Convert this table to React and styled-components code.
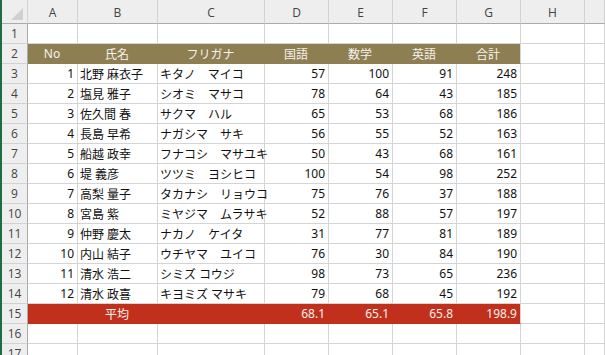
import React from "react";
import styled, { createGlobalStyle, css } from "styled-components";

const Global = createGlobalStyle`
  html, body { margin: 0; padding: 0; background: #ffffff; }
  body { font-family: "Noto Sans", "Noto Sans CJK JP", sans-serif; }
`;

const COLS = "26px 50px 80px 107px 64px 64px 64px 64px 64px 1fr";

const Sheet = styled.div`
  width: 605px;
  height: 355px;
  overflow: hidden;
  box-sizing: border-box;
  border-left: 2px solid #1f6e43;
  background: #fff;
`;

const Row = styled.div`
  display: grid;
  grid-template-columns: ${COLS};
  height: ${(p) => (p.$head ? 24 : 20)}px;
`;

const Corner = styled.div`
  box-sizing: border-box;
  background: #eeeeee;
  border-right: 1px solid #d2d2d2;
  border-bottom: 1px solid #ababab;
  display: flex;
  align-items: flex-end;
  justify-content: flex-end;
  padding: 0 4px 3px 0;
`;

const ColHead = styled.div`
  box-sizing: border-box;
  background: #eeeeee;
  border-right: 1px solid #d2d2d2;
  border-bottom: 1px solid #ababab;
  color: #444444;
  font-family: "Open Sans", "Noto Sans", sans-serif;
  font-size: 12px;
  display: flex;
  align-items: center;
  justify-content: center;
  padding-top: 1px;
`;

const RowHead = styled.div`
  box-sizing: border-box;
  background: #eeeeee;
  border-right: 1px solid #ababab;
  border-bottom: 1px solid #d2d2d2;
  color: #444444;
  font-family: "Open Sans", "Noto Sans", sans-serif;
  font-size: 12px;
  display: flex;
  align-items: center;
  justify-content: center;
`;

const fills = {
  head: "#8e7f53",
  avg: "#c0301c",
};

const Cell = styled.div`
  box-sizing: border-box;
  border-right: 1px solid #d4d4d4;
  border-bottom: 1px solid #d4d4d4;
  font-size: 12px;
  color: #111111;
  display: flex;
  align-items: center;
  white-space: nowrap;
  overflow: visible;
  padding: 0 3px 0 2px;
  justify-content: ${(p) =>
    p.$align === "right" ? "flex-end" : p.$align === "center" ? "center" : "flex-start"};
  ${(p) =>
    p.$fill &&
    css`
      background: ${fills[p.$fill]};
      color: #f6f2ee;
      border-right-color: ${p.$edge ? "#d4d4d4" : fills[p.$fill]};
      border-bottom-color: ${fills[p.$fill]};
    `}
`;

const Triangle = () => (
  <svg width="12" height="12" viewBox="0 0 12 12">
    <polygon points="12,0 12,12 0,12" fill="#d0d0d0" />
  </svg>
);

const letters = ["A", "B", "C", "D", "E", "F", "G", "H", ""];

const data = [
  [1, "北野 麻衣子", "キタノ　マイコ", 57, 100, 91, 248],
  [2, "塩見 雅子", "シオミ　マサコ", 78, 64, 43, 185],
  [3, "佐久間 春", "サクマ　ハル", 65, 53, 68, 186],
  [4, "長島 早希", "ナガシマ　サキ", 56, 55, 52, 163],
  [5, "船越 政幸", "フナコシ　マサユキ", 50, 43, 68, 161],
  [6, "堤 義彦", "ツツミ　ヨシヒコ", 100, 54, 98, 252],
  [7, "高梨 量子", "タカナシ　リョウコ", 75, 76, 37, 188],
  [8, "宮島 紫", "ミヤジマ　ムラサキ", 52, 88, 57, 197],
  [9, "仲野 慶太", "ナカノ　ケイタ", 31, 77, 81, 189],
  [10, "内山 結子", "ウチヤマ　ユイコ", 76, 30, 84, 190],
  [11, "清水 浩二", "シミズ コウジ", 98, 73, 65, 236],
  [12, "清水 政喜", "キヨミズ マサキ", 79, 68, 45, 192],
];

const headers = ["No", "氏名", "フリガナ", "国語", "数学", "英語", "合計"];

const Blank = () => (
  <>
    <Cell />
    <Cell />
  </>
);

export default function App() {
  return (
    <>
      <Global />
      <Sheet>
        <Row $head>
          <Corner>
            <Triangle />
          </Corner>
          {letters.map((l, i) => (
            <ColHead key={i}>{l}</ColHead>
          ))}
        </Row>
        <Row>
          <RowHead>1</RowHead>
          {letters.map((_, i) => (
            <Cell key={i} />
          ))}
        </Row>
        <Row>
          <RowHead>2</RowHead>
          {headers.map((h, i) => (
            <Cell key={i} $fill="head" $edge={i === 6} $align="center">
              {h}
            </Cell>
          ))}
          <Blank />
        </Row>
        {data.map((r, idx) => (
          <Row key={idx}>
            <RowHead>{idx + 3}</RowHead>
            <Cell $align="right">{r[0]}</Cell>
            <Cell>{r[1]}</Cell>
            <Cell>{r[2]}</Cell>
            <Cell $align="right">{r[3]}</Cell>
            <Cell $align="right">{r[4]}</Cell>
            <Cell $align="right">{r[5]}</Cell>
            <Cell $align="right">{r[6]}</Cell>
            <Blank />
          </Row>
        ))}
        <Row>
          <RowHead>15</RowHead>
          <Cell $fill="avg" />
          <Cell $fill="avg" $align="center">平均</Cell>
          <Cell $fill="avg" />
          <Cell $fill="avg" $align="right">68.1</Cell>
          <Cell $fill="avg" $align="right">65.1</Cell>
          <Cell $fill="avg" $align="right">65.8</Cell>
          <Cell $fill="avg" $edge $align="right">198.9</Cell>
          <Blank />
        </Row>
        {[16, 17].map((n) => (
          <Row key={n}>
            <RowHead>{n}</RowHead>
            {letters.map((_, i) => (
              <Cell key={i} />
            ))}
          </Row>
        ))}
      </Sheet>
    </>
  );
}
